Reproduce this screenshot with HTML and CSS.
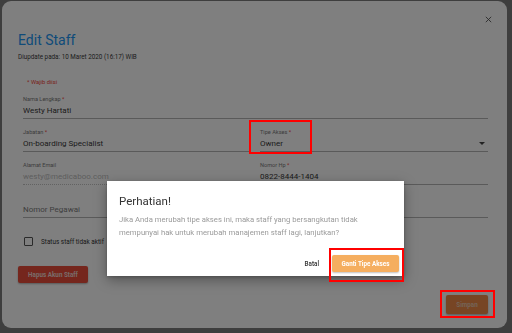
FILE: index.html
```html
<!DOCTYPE html>
<html lang="id">
<head>
  <meta charset="UTF-8">
  <meta name="viewport" content="width=device-width, initial-scale=1.0">
  <title>Edit Staff</title>
  <link rel="stylesheet" href="styles.css">
</head>
<body>
  <div class="modal">
    <button class="close" aria-label="Tutup">
      <svg width="7" height="7" viewBox="0 0 7 7"><path d="M0.8 0.8 L6.2 6.2 M6.2 0.8 L0.8 6.2" stroke="#555" stroke-width="0.9" fill="none"/></svg>
    </button>
    <h1 class="title">Edit Staff</h1>
    <div class="updated">Diupdate pada: 10 Maret 2020 (16:17) WIB</div>

    <div class="form">
      <div class="required">* Wajib diisi</div>

      <div class="field">
        <label>Nama Lengkap <span class="star">*</span></label>
        <div class="value">Westy Hartati</div>
      </div>

      <div class="row">
        <div class="field">
          <label>Jabatan <span class="star">*</span></label>
          <div class="value">On-boarding Specialist</div>
        </div>
        <div class="field">
          <label>Tipe Akses <span class="star">*</span></label>
          <div class="value select">Owner <span class="caret"></span></div>
        </div>
      </div>

      <div class="row">
        <div class="field disabled">
          <label>Alamat Email</label>
          <div class="value">westy@medicaboo.com</div>
        </div>
        <div class="field">
          <label>Nomor Hp <span class="star">*</span></label>
          <div class="value">0822-8444-1404</div>
        </div>
      </div>

      <div class="row">
        <div class="field">
          <label>&nbsp;</label>
          <div class="value placeholder">Nomor Pegawai</div>
        </div>
        <div class="field">
          <label>&nbsp;</label>
          <div class="value">&nbsp;</div>
        </div>
      </div>

      <div class="check">
        <span class="box"></span>
        <span>Status staff tidak aktif</span>
      </div>
    </div>

    <button class="btn danger">Hapus Akun Staff</button>

    <div class="footer">
      <button class="btn save">Simpan</button>
    </div>
  </div>

  <div class="scrim"></div>

  <div class="dialog">
    <h2>Perhatian!</h2>
    <p>Jika Anda merubah tipe akses ini, maka staff yang bersangkutan tidak mempunyai hak untuk merubah manajemen staff lagi, lanjutkan?</p>
    <div class="actions">
      <button class="btn text">Batal</button>
      <button class="btn accent">Ganti Tipe Akses</button>
    </div>
  </div>

  <!-- annotation boxes -->
  <div class="mark mark-akses"></div>
  <div class="mark mark-ganti"></div>
  <div class="mark mark-simpan"></div>
</body>
</html>
```

FILE: styles.css
```css
body {
  margin: 0;
  background: #7c7c7c;
  font-family: Roboto, "Noto Sans", sans-serif;
  height: 333px;
  overflow: hidden;
}

button {
  font-family: inherit;
  border: none;
  cursor: pointer;
}

/* Edit Staff modal */
.modal {
  position: relative;
  margin: 1px 0 0 2px;
  width: 505px;
  height: 327px;
  box-sizing: border-box;
  padding: 31px 19px 0 16px;
  background: #fff;
  border-radius: 9px;
  display: flex;
  flex-direction: column;
}

.close {
  position: absolute;
  top: 15px;
  right: 15px;
  padding: 0;
  background: none;
  line-height: 0;
}

.title {
  margin: 0;
  font-size: 14px;
  line-height: 16px;
  font-weight: 400;
  color: #2196f3;
}

.updated {
  margin-top: 4px;
  font-size: 6.3px;
  line-height: 10px;
  color: #3a3a3a;
}

.form {
  padding: 0 0 0 5px;
}

.required {
  margin: 16px 0 0 4px;
  font-size: 5.8px;
  line-height: 8px;
  color: #f44336;
}

.row {
  display: grid;
  grid-template-columns: 1fr 1fr;
  column-gap: 9px;
}

.field {
  padding-top: 8px;
}

.field label {
  display: block;
  font-size: 5.6px;
  line-height: 10px;
  color: #7a7a7a;
}

.star {
  color: #f44336;
}

.field .value {
  font-size: 8px;
  line-height: 13px;
  padding-bottom: 1px;
  color: #383838;
  border-bottom: 1px solid #b5b5b5;
}

.field.disabled .value {
  color: #bdbdbd;
  border-bottom: 1px dotted #c4c4c4;
}

.field .placeholder {
  color: #7d7d7d;
}

.select {
  display: flex;
  justify-content: space-between;
  align-items: center;
}

.caret {
  width: 0;
  height: 0;
  margin-right: 3px;
  border-left: 3px solid transparent;
  border-right: 3px solid transparent;
  border-top: 3px solid #444;
}

.check {
  display: flex;
  align-items: center;
  gap: 8px;
  margin: 19px 0 0 1px;
  font-size: 6.4px;
  color: #333;
}

.check .box {
  width: 7px;
  height: 7px;
  border: 1px solid #555;
  border-radius: 1px;
}

.btn {
  font-size: 6.3px;
  font-weight: 700;
  border-radius: 2px;
  padding: 0;
}

.danger {
  align-self: flex-start;
  margin-top: 20px;
  width: 70px;
  height: 17px;
  background: #ea4d3b;
  color: #f2d8d4;
  box-shadow: 0 1px 2px rgba(0, 0, 0, 0.3);
}

.footer {
  display: flex;
  justify-content: flex-end;
  margin-top: 12px;
}

.save {
  width: 42px;
  height: 19px;
  background: #ee8a48;
  color: #e9c8b0;
  box-shadow: 0 1px 2px rgba(0, 0, 0, 0.3);
}

/* Backdrop */
.scrim {
  position: fixed;
  inset: 0;
  background: rgba(0, 0, 0, 0.5);
  z-index: 10;
}

/* Confirmation dialog */
.dialog {
  position: absolute;
  left: 107px;
  top: 181px;
  width: 297px;
  height: 95px;
  box-sizing: border-box;
  padding: 13px 5px 4px 12px;
  background: #fff;
  box-shadow: 0 4px 12px rgba(0, 0, 0, 0.35), 0 1px 3px rgba(0, 0, 0, 0.2);
  z-index: 20;
  display: flex;
  flex-direction: column;
}

.dialog h2 {
  margin: 0;
  font-size: 11.5px;
  line-height: 14px;
  font-weight: 400;
  color: #333;
}

.dialog p {
  margin: 5px 20px 0 0;
  font-size: 7.7px;
  line-height: 13px;
  color: #9a9a9a;
}

.actions {
  margin-top: auto;
  display: flex;
  justify-content: flex-end;
  align-items: center;
  gap: 13px;
}

.text {
  background: none;
  color: #333;
  font-weight: 500;
}

.accent {
  width: 67px;
  height: 17px;
  background: #f5ae5f;
  color: #fff;
  box-shadow: 0 1px 2px rgba(0, 0, 0, 0.25);
}

/* Red highlight boxes */
.mark {
  position: absolute;
  border: 2px solid #ff0000;
  box-sizing: border-box;
  z-index: 30;
}

.mark-akses { left: 249px; top: 120px; width: 63px; height: 34px; }
.mark-ganti { left: 329px; top: 248px; width: 75px; height: 34px; }
.mark-simpan { left: 440px; top: 290px; width: 55px; height: 28px; }
```
